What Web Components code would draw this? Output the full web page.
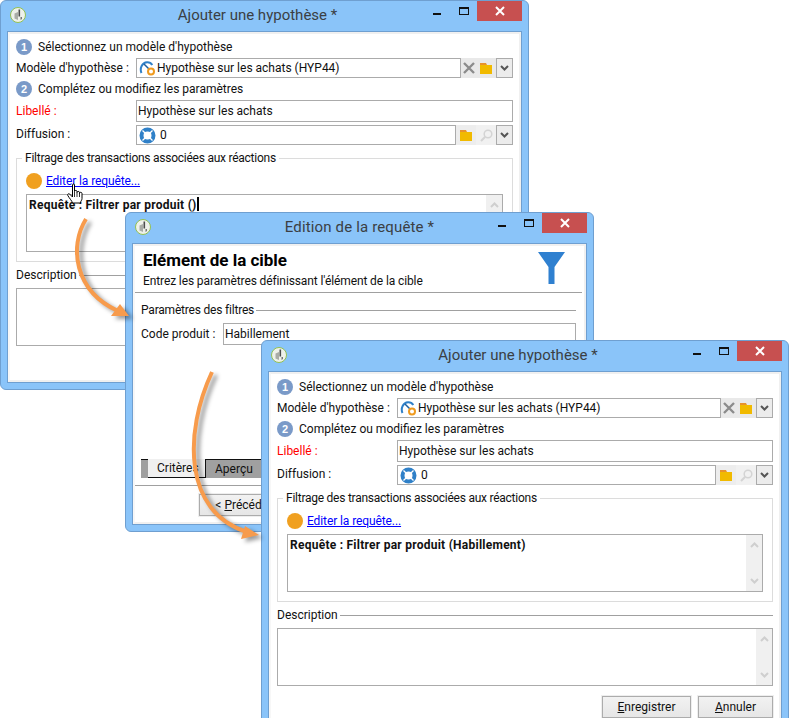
<!DOCTYPE html>
<html lang="fr">
<head>
<meta charset="utf-8">
<title>Ajouter une hypothèse</title>
<style>
    html, body { margin: 0; padding: 0; background: #fff; overflow: hidden; }
    body { font: 12px/16px Roboto, "Noto Sans", "Liberation Sans", sans-serif; color: #111; }
    /* free canvas: the windows and arrows are placed on it */
    #desk { position: relative; width: 796px; height: 718px; overflow: hidden; }
</style>
</head>
<body>
<div id="desk">
    <app-window heading="Ajouter une hypothèse *" shift="-14" style="left:0;top:0;width:529px;height:390px">
        <hypo-form query="Requête : Filtrer par produit ()" caret></hypo-form>
    </app-window>
    <hand-cursor style="left:66px;top:183px"></hand-cursor>
    <app-window heading="Edition de la requête *" style="left:125px;top:212px;width:469px;height:320px;--title-ls:.15px">
        <filter-form></filter-form>
    </app-window>
    <app-window heading="Ajouter une hypothèse *" shift="-14" style="left:261px;top:340px;width:528px;height:390px">
        <hypo-form query="Requête : Filtrer par produit (Habillement)"></hypo-form>
    </app-window>
    <flow-arrow d="M86 219C69 246 74 291 118 311" head="129,316 120,304 111,316"></flow-arrow>
    <flow-arrow d="M212 372C184 432 183 512 247 532" head="259,535 245,526 241,539"></flow-arrow>
</div>

<script>
// Build a template from a string of markup.
function tpl (html) {
    const t = document.createElement('template');
    t.innerHTML = html;
    return t;
}

const ICONS = {
    logo: `<svg width="16" height="16" viewBox="0 0 16 16"><circle cx="8" cy="8" r="7.5" fill="#eef1ea" stroke="#93c152"/><path d="M4.5 6.5 8 5v8l-3.5-1.5z" fill="#a9aca6"/><path d="M8.5 2.5h1.6v7H8.500z" fill="#4c4c4c"/><path d="M10.500 10h1.500v2l-1.500 1z" fill="#777"/></svg>`,
    gauge: `<svg width="17" height="17" viewBox="0 0 17 17"><path d="M2.500 13C.500 8.500 3 2.500 8 2.300c2.500-.1 4.200 1 5.300 2.700" fill="none" stroke="#2f80c8" stroke-width="2"/><path d="M5 4l5 5" stroke="#1f5f9e" stroke-width="1.500"/><circle cx="12" cy="11.500" r="3" fill="#fff" stroke="#ef9a1e" stroke-width="2"/></svg>`,
    ring: `<svg width="17" height="17" viewBox="0 0 17 17"><circle cx="8.500" cy="8.500" r="6" fill="#fff" stroke="#2f80c8" stroke-width="4"/><path d="M3.500 3.500l2.800 2.800M13.500 3.500l-2.800 2.800M3.500 13.500l2.800-2.800M13.500 13.500l-2.800-2.800" stroke="#fff" stroke-width="1.300"/></svg>`,
    cross: `<svg width="12" height="12" viewBox="0 0 12 12"><path d="M1 1l10 10M11 1L1 11" stroke="#8c8c8c" stroke-width="2.400"/></svg>`,
    folder: `<svg width="12" height="11" viewBox="0 0 12 11"><path d="M0 0h6l1 2H0z" fill="#e8922c"/><path d="M0 2h12v9H0z" fill="#f1ba00"/></svg>`,
    search: `<svg width="13" height="13" viewBox="0 0 13 13"><circle cx="8" cy="5" r="3.800" fill="none" stroke="#d4d4d4" stroke-width="1.500"/><path d="M5.200 7.800L1 12" stroke="#d4d4d4" stroke-width="2"/></svg>`,
    chevron: `<svg width="9" height="6" viewBox="0 0 9 6"><path d="M1 1l3.500 3.500L8 1" fill="none" stroke="#555" stroke-width="2"/></svg>`
};

class AppWindow extends HTMLElement {
    constructor () {
        super();
        this.attachShadow({ mode: 'open' });
        this.shadowRoot.appendChild(AppWindow.template.content.cloneNode(true));
    }
    connectedCallback () {
        const title = this.shadowRoot.querySelector('.heading');
        title.textContent = this.getAttribute('heading');
        // Caption text isn't always centred on the window.
        title.style.left = (this.getAttribute('shift') || 0) / 2 + 'px';
    }
}
AppWindow.template = tpl(`
<style>
    :host {
        position: absolute;
        box-sizing: border-box;
        display: flex;
        flex-direction: column;
        padding: 0 6px 6px;
        background: #8ac4f9;
        border: 1px solid #6f9fd0;
        border-radius: 6px;
    }
    .bar { position: relative; flex: 0 0 30px; display: flex; align-items: flex-start; justify-content: flex-end; }
    .logo { position: absolute; left: 3px; top: 6px; width: 16px; height: 16px; }
    .heading { position: absolute; left: 0; width: 100%; top: 3px; text-align: center; font-size: 15px; line-height: 22px; color: #3b3f44; letter-spacing: var(--title-ls, 0); }
    .heading { pointer-events: none; }
    .min { width: 8px; height: 2px; margin: 12px 18px 0 0; background: #111; position: relative; }
    .max { box-sizing: border-box; width: 10px; height: 8px; margin: 6px 8px 0 0; border: 1px solid #111; border-top-width: 2px; position: relative; }
    .close { width: 45px; height: 20px; background: #c75050; display: flex; align-items: center; justify-content: center; position: relative; }
    .client { flex: 1; min-height: 0; display: flex; background: #fff; border: 1px solid #6f9fd0; }
    .inner { flex: 1; min-width: 0; display: flex; box-sizing: border-box; border: solid #f0f0f0; border-width: 2px; border-left-color: #f7f7f7; }
</style>
<div class="bar">
    <span class="logo">${ICONS.logo}</span>
    <span class="heading"></span>
    <span class="min"></span>
    <span class="max"></span>
    <span class="close"><svg width="10" height="10" viewBox="0 0 10 10"><path d="M1 1l8 8M9 1L1 9" stroke="#fff" stroke-width="2"/></svg></span>
</div>
<div class="client"><div class="inner"><slot></slot></div></div>
`);

class StepHeading extends HTMLElement {
    constructor () {
        super();
        this.attachShadow({ mode: 'open' });
        this.shadowRoot.appendChild(StepHeading.template.content.cloneNode(true));
    }
    connectedCallback () {
        this.shadowRoot.querySelector('.num').textContent = this.getAttribute('num');
    }
}
StepHeading.template = tpl(`
<style>
    :host { display: flex; align-items: center; height: 16px; gap: 6px; }
    .num { width: 16px; height: 16px; border-radius: 50%; background: #7a9ac8; color: #fff; font: bold 11px/16px "Liberation Sans", sans-serif; text-align: center; }
</style>
<span class="num"></span><slot></slot>
`);

class FormRow extends HTMLElement {
    constructor () {
        super();
        this.attachShadow({ mode: 'open' });
        this.shadowRoot.appendChild(FormRow.template.content.cloneNode(true));
    }
    connectedCallback () {
        const label = this.shadowRoot.querySelector('label');
        label.textContent = this.getAttribute('label');
        label.style.color = this.hasAttribute('required') ? '#f00' : '';
    }
}
FormRow.template = tpl(`
<style>
    :host { display: grid; grid-template-columns: var(--label-w, 120px) 1fr; align-items: center; }
    label { white-space: nowrap; padding-bottom: var(--lift, 0); }
</style>
<label></label><slot></slot>
`);

// Text box with its optional icon and tool tiles on the right.
class PickField extends HTMLElement {
    constructor () {
        super();
        this.attachShadow({ mode: 'open' });
        this.shadowRoot.appendChild(PickField.template.content.cloneNode(true));
    }
    connectedCallback () {
        const root = this.shadowRoot;
        root.querySelector('.val').textContent = this.getAttribute('value');
        const icon = this.getAttribute('icon');
        const box = root.querySelector('.box');
        if (icon) {
            root.querySelector('.ico').innerHTML = ICONS[icon];
            box.style.gap = icon === 'ring' ? '4px' : '1px';
        } else {
            root.querySelector('.ico').remove();
            box.style.paddingLeft = '1px';
        }
        const tools = (this.getAttribute('tools') || '').split(' ').filter(Boolean);
        const holder = root.querySelector('.tools');
        tools.forEach((name) => {
            const tile = document.createElement('span');
            tile.className = 'tile ' + name;
            tile.innerHTML = ICONS[name];
            holder.appendChild(tile);
        });
        if (tools.length) {
            const drop = document.createElement('span');
            drop.className = 'drop';
            drop.innerHTML = ICONS.chevron;
            holder.appendChild(drop);
        }
    }
}
PickField.template = tpl(`
<style>
    :host { display: flex; height: var(--h, 20px); min-width: 0; }
    .box { flex: 1; min-width: 0; box-sizing: border-box; border: 1px solid #ababab; display: flex; align-items: center; padding-left: 2px; white-space: nowrap; overflow: hidden; }
    .ico { flex: none; display: flex; }
    .tools { display: flex; flex: none; }
    .tile { display: flex; align-items: center; justify-content: center; background: #e9e9e9; }
    .cross { width: 15px; }
    .folder { width: 20px; background: #ededed; }
    .cross + .folder { background: #e9e9e9; }
    .search { width: 20px; background: #f1f1f1; }
    .drop { box-sizing: border-box; width: 17px; border: 1px solid #ababab; background: #ececec; display: flex; align-items: center; justify-content: center; }
</style>
<div class="box"><span class="ico"></span><span class="val"></span></div><div class="tools"></div>
`);

// Framed text area with a pale, inactive scrollbar.
class MemoBox extends HTMLElement {
    constructor () {
        super();
        this.attachShadow({ mode: 'open' });
        this.shadowRoot.appendChild(MemoBox.template.content.cloneNode(true));
    }
}
MemoBox.template = tpl(`
<style>
    :host { display: flex; box-sizing: border-box; height: 58px; border: 1px solid #ababab; background: #fff; }
    .text { flex: 1; min-width: 0; padding: 2px 2px 0; font-weight: bold; letter-spacing: .25px; white-space: nowrap; overflow: hidden; }
    .scroll { flex: 0 0 16px; background: #f0f0f0; display: flex; flex-direction: column; justify-content: space-between; align-items: center; padding: 7px 0; }
    .scroll svg { display: block; }
</style>
<div class="text"><slot></slot></div>
<div class="scroll">
    <svg width="9" height="6" viewBox="0 0 9 6"><path d="M1 5l3.500-3.500L8 5" fill="none" stroke="#cfcfcf" stroke-width="2"/></svg>
    <svg width="9" height="6" viewBox="0 0 9 6"><path d="M1 1l3.500 3.500L8 1" fill="none" stroke="#cfcfcf" stroke-width="2"/></svg>
</div>
`);

class LineTitle extends HTMLElement {
    constructor () {
        super();
        this.attachShadow({ mode: 'open' });
        this.shadowRoot.appendChild(LineTitle.template.content.cloneNode(true));
    }
}
LineTitle.template = tpl(`
<style>
    :host { display: flex; align-items: center; gap: 2px; height: 16px; white-space: nowrap; }
    i { flex: 1; height: 1px; background: #a0a0a0; }
</style>
<slot></slot><i></i>
`);

class PushButton extends HTMLElement {
    constructor () {
        super();
        this.attachShadow({ mode: 'open' });
        this.shadowRoot.appendChild(PushButton.template.content.cloneNode(true));
        this.setAttribute('role', 'button');
    }
}
PushButton.template = tpl(`
<style>
    :host { display: inline-flex; box-sizing: border-box; height: 22px; align-items: center; justify-content: center; border: 1px solid #acacac; background: linear-gradient(#f2f2f2, #e6e6e6); box-shadow: 0 0 0 1px #eeeeee; white-space: nowrap; }
</style>
<slot></slot>
`);

class HypoForm extends HTMLElement {
    constructor () {
        super();
        this.attachShadow({ mode: 'open' });
        this.shadowRoot.appendChild(HypoForm.template.content.cloneNode(true));
    }
    connectedCallback () {
        const q = this.shadowRoot.querySelector('.query');
        q.firstChild.textContent = this.getAttribute('query');
        if (!this.hasAttribute('caret')) {
            this.shadowRoot.querySelector('.caret').remove();
        }
    }
}
HypoForm.template = tpl(`
<style>
    :host { display: flex; flex-direction: column; flex: 1; min-width: 0; padding: 5px 6px 0; }
    .t3 { margin-top: 3px; }
    .lib { --h: 22px; }
    .dif { --lift: 2px; }
    fieldset { margin: 5px 0 0; padding: 7px 9px 9px; border: 1px solid #dcdcdc; min-width: 0; }
    legend { margin-left: -4px; padding: 0 3px; line-height: 16px; letter-spacing: -.25px; }
    .link { display: flex; align-items: center; gap: 4px; height: 16px; margin-bottom: 5px; }
    .dot { width: 16px; height: 16px; border-radius: 50%; background: #f0a020; }
    a { color: #00f; text-decoration: underline; letter-spacing: -.1px; }
    .caret { display: inline-block; width: 2px; height: 14px; background: #000; vertical-align: -2px; }
    .desc { margin-top: 5px; }
    .memo { margin-top: 5px; }
    .btns { display: flex; justify-content: flex-end; gap: 7px; margin-top: 10px; }
    .save { width: 89px; }
    .undo { width: 75px; }
    u { text-decoration: underline; }
</style>
<step-heading num="1">Sélectionnez un modèle d'hypothèse</step-heading>
<form-row class="t3" label="Modèle d'hypothèse :"><pick-field icon="gauge" value="Hypothèse sur les achats (HYP44)" tools="cross folder"></pick-field></form-row>
<step-heading class="t3" num="2">Complétez ou modifiez les paramètres</step-heading>
<form-row class="t3 lib" label="Libellé :" required><pick-field value="Hypothèse sur les achats"></pick-field></form-row>
<form-row class="t3 dif" label="Diffusion :"><pick-field icon="ring" value="0" tools="folder search"></pick-field></form-row>
<fieldset>
    <legend>Filtrage des transactions associées aux réactions</legend>
    <div class="link"><span class="dot"></span><a href="#">Editer la requête...</a></div>
    <memo-box><span class="query"> <span class="caret"></span></span></memo-box>
</fieldset>
<line-title class="desc">Description</line-title>
<memo-box class="memo"></memo-box>
<div class="btns">
    <push-button class="save"><span><u>E</u>nregistrer</span></push-button>
    <push-button class="undo"><span><u>A</u>nnuler</span></push-button>
</div>
`);

class FilterForm extends HTMLElement {
    constructor () {
        super();
        this.attachShadow({ mode: 'open' });
        this.shadowRoot.appendChild(FilterForm.template.content.cloneNode(true));
    }
}
FilterForm.template = tpl(`
<style>
    :host { display: flex; flex-direction: column; flex: 1; min-width: 0; }
    header { display: flex; justify-content: space-between; height: 46px; margin-right: 2px; padding: 0 17px 0 8px; border-bottom: 1px solid #a0a0a0; }
    h1 { margin: 5px 0 4px; font-size: 17px; line-height: 18px; font-weight: bold; color: #000; }
    p { margin: 0; letter-spacing: -.11px; }
    header svg { margin-top: 6px; }
    .body { flex: 1; padding: 9px 8px 0 6px; --label-w: 82px; }
    .body line-title { letter-spacing: -.2px; }
    .body form-row { margin-top: 5px; --h: 22px; }
    .tabs { display: flex; height: 19px; margin: 0 8px 0 6px; padding-left: 7px; background: #a0a0a0; border-top: 1px solid #111; box-sizing: border-box; }
    .tab { display: flex; align-items: center; }
    .on { box-sizing: border-box; width: 58px; padding-left: 9px; background: #f0f0f0; border: solid #111; border-width: 0 1px 1px 0; margin-top: -1px; }
    .off { padding-left: 9px; }
    hr { margin: 7px 2px 8px 0; border: 0; height: 1px; background: #a0a0a0; }
    .foot { padding: 0 0 6px 64px; }
    .foot push-button { width: 96px; }
    u { text-decoration: underline; }
</style>
<header>
    <div>
        <h1>Elément de la cible</h1>
        <p>Entrez les paramètres définissant l'élément de la cible</p>
    </div>
    <svg width="27" height="32" viewBox="0 0 27 32"><path d="M0 0h27L16.500 15v17h-6V15z" fill="#2f80d0"/></svg>
</header>
<div class="body">
    <line-title>Paramètres des filtres</line-title>
    <form-row label="Code produit :"><pick-field value="Habillement"></pick-field></form-row>
</div>
<div class="tabs">
    <span class="tab on">Critères</span>
    <span class="tab off">Aperçu</span>
</div>
<hr>
<div class="foot"><push-button><span>&lt; <u>P</u>récédent</span></push-button></div>
`);

class HandCursor extends HTMLElement {
    constructor () {
        super();
        this.attachShadow({ mode: 'open' });
        this.shadowRoot.appendChild(HandCursor.template.content.cloneNode(true));
    }
}
HandCursor.template = tpl(`
<style>
    :host { position: absolute; width: 19px; height: 23px; }
    svg { display: block; }
</style>
<svg width="19" height="23" viewBox="0 0 19 23">
    <path d="M6.500 2C6.500.6 8.500.6 8.500 2v6.500c0-1.400 2.500-1.400 2.500 0v1c0-1.400 2.500-1.400 2.500 0v.8c0-1.300 2.500-1.300 2.500.2v5c0 2-1.500 2.500-1.500 4.500H6.500c-.4-2-3-4.500-4.700-7.500-.7-1.300.8-2.400 2-1.300l2.700 2.800z" fill="#fff" stroke="#000" stroke-linejoin="round"/>
    <path d="M8.500 9v5M11 9.500V14M13.500 10v4" stroke="#000" stroke-width=".8"/>
</svg>
`);

// Orange arrow linking one window to the next, with its soft shadow.
class FlowArrow extends HTMLElement {
    constructor () {
        super();
        this.attachShadow({ mode: 'open' });
        this.shadowRoot.appendChild(FlowArrow.template.content.cloneNode(true));
    }
    connectedCallback () {
        this.shadowRoot.querySelector('path').setAttribute('d', this.getAttribute('d'));
        this.shadowRoot.querySelector('polygon').setAttribute('points', this.getAttribute('head'));
    }
}
FlowArrow.template = tpl(`
<style>
    :host { position: absolute; left: 0; top: 0; pointer-events: none; }
    svg { display: block; filter: drop-shadow(4px 3px 2px rgba(0, 0, 0, .4)); }
</style>
<svg width="796" height="718" viewBox="0 0 796 718">
    <path fill="none" stroke="#f79b4c" stroke-width="4"/>
    <polygon fill="#f79b4c"/>
</svg>
`);

window.customElements.define('app-window', AppWindow);
window.customElements.define('step-heading', StepHeading);
window.customElements.define('form-row', FormRow);
window.customElements.define('pick-field', PickField);
window.customElements.define('memo-box', MemoBox);
window.customElements.define('line-title', LineTitle);
window.customElements.define('push-button', PushButton);
window.customElements.define('hypo-form', HypoForm);
window.customElements.define('filter-form', FilterForm);
window.customElements.define('hand-cursor', HandCursor);
window.customElements.define('flow-arrow', FlowArrow);
</script>
</body>
</html>
